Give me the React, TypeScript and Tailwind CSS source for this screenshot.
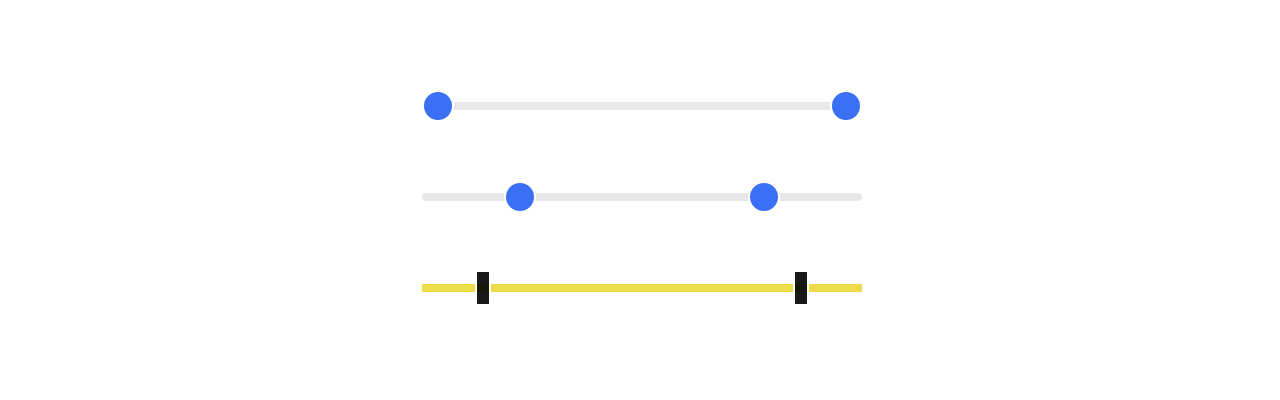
import React from 'react';

type Variant = 'round' | 'bar';

interface RangeProps {
    low: number;
    high: number;
    variant: Variant;
    trackClass: string;
    thumbWidth: number;
}

// Thumb centre along the track, keeping the thumb fully inside it
const thumbLeft = (pct: number, thumbWidth: number) =>
    `calc(${thumbWidth / 2}px + (100% - ${thumbWidth}px) * ${pct / 100})`;

const RangeSlider: React.FC<RangeProps> = ({ low, high, variant, trackClass, thumbWidth }) => {
    const thumbClass =
        variant === 'round'
            ? 'w-8 h-8 rounded-full bg-[#3b6ff6] border-2 border-white'
            : 'w-4 h-9 bg-black/90 border-2 border-white';

    return (
        <div className="relative h-9 flex items-center">
            <div className={`w-full h-2 ${trackClass}`} />
            {[low, high].map((v, i) => (
                <div
                    key={i}
                    className={`absolute top-1/2 -translate-x-1/2 -translate-y-1/2 ${thumbClass}`}
                    style={{ left: thumbLeft(v, thumbWidth) }}
                />
            ))}
        </div>
    );
};

const App: React.FC = () => {
    return (
        <div className="w-[1280px] h-[400px] bg-white flex justify-center">
            <div className="w-[440px] ml-[4px] pt-[88px] flex flex-col gap-[55px]">
                <RangeSlider low={0} high={100} variant="round" thumbWidth={32} trackClass="bg-[#e8e8e8] rounded-full" />
                <RangeSlider low={20} high={80} variant="round" thumbWidth={32} trackClass="bg-[#e8e8e8] rounded-full" />
                <RangeSlider low={12.5} high={87.5} variant="bar" thumbWidth={16} trackClass="bg-[#eedb4b]" />
            </div>
        </div>
    );
};

export default App;
